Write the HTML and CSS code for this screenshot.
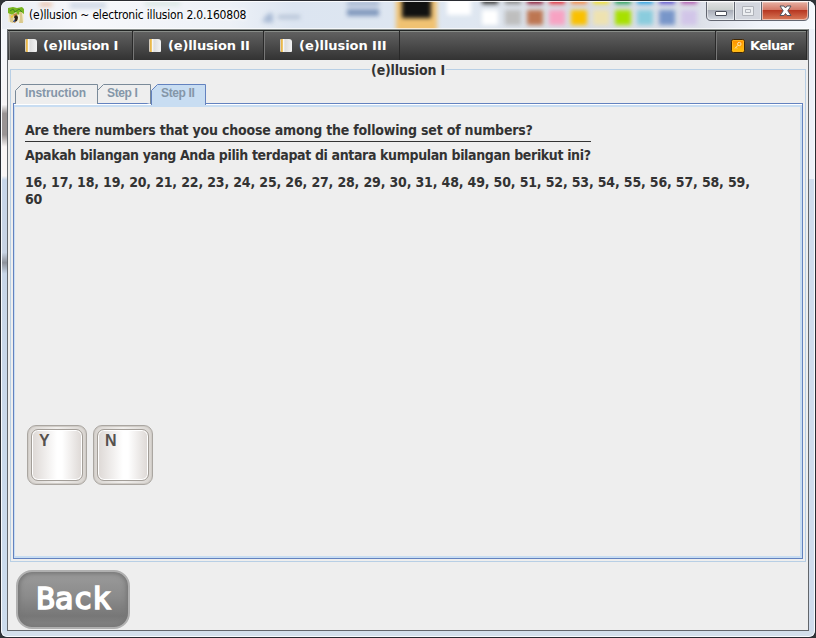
FILE: index.html
```html
<!DOCTYPE html>
<html lang="id">
<head>
<meta charset="utf-8">
<title>(e)llusion ~ electronic illusion 2.0.160808</title>
<link rel="stylesheet" href="styles.css">
</head>
<body>
<div class="window">
  <svg class="glass" width="816" height="638" aria-hidden="true">
    <defs>
      <filter id="soft" x="-30%" y="-30%" width="160%" height="160%" color-interpolation-filters="sRGB"><feGaussianBlur stdDeviation="2.2"/></filter>
      <linearGradient id="top" x1="0" x2="1" y1="0" y2="0">
        <stop offset="0" stop-color="#e9edf4"/><stop offset=".1" stop-color="#f7f8fb"/><stop offset=".28" stop-color="#edf1f7"/><stop offset=".36" stop-color="#dce5f1"/><stop offset=".58" stop-color="#dfe7f1"/><stop offset=".7" stop-color="#d8dce3"/><stop offset=".86" stop-color="#dde1e9"/><stop offset=".93" stop-color="#f0f4fa"/><stop offset="1" stop-color="#f6f9fd"/>
      </linearGradient>
      <linearGradient id="side" x1="0" x2="0" y1="0" y2="1">
        <stop offset="0" stop-color="#f4f7fb"/><stop offset=".12" stop-color="#f6f3f4"/><stop offset=".125" stop-color="#f7f5f6"/><stop offset=".14" stop-color="#9a9494"/><stop offset=".175" stop-color="#9a9494"/><stop offset=".195" stop-color="#f9f5f5"/><stop offset=".243" stop-color="#f9f5f5"/><stop offset=".25" stop-color="#c8d6e9"/><stop offset=".37" stop-color="#c8d3e3"/><stop offset=".387" stop-color="#8e929b"/><stop offset=".405" stop-color="#c8d6e8"/><stop offset="1" stop-color="#ccdced"/>
      </linearGradient>
    </defs>
    <rect width="816" height="638" fill="#ccdbed"/>
    <rect y="1" width="816" height="28" fill="url(#top)"/>
    <rect x="2" y="29" width="5" height="604" fill="url(#side)"/>
    <rect x="809" y="29" width="5" height="150" fill="#edf1f8"/>
    <rect x="809" y="179" width="5" height="452" fill="#d0dced"/>
    <rect x="2" y="631" width="812" height="5" fill="#d3dfeb"/>
    <g filter="url(#soft)">
      <rect x="40" y="2" width="12" height="5" fill="#eac9b5"/><rect x="70" y="2" width="36" height="7" fill="#d4dce8"/><rect x="145" y="1" width="35" height="5" fill="#dce8e5"/>
      <path d="M262 22q6-12 11-8v9z" fill="#aabbd5"/><rect x="278" y="15" width="22" height="4" fill="#b6c3d6"/>
      <rect x="347" y="1" width="32" height="5" fill="#a8b8d2"/><rect x="347" y="9" width="32" height="7" fill="#8299bd"/>
      <rect x="396" y="-4" width="41" height="38" fill="#f0c272"/><rect x="402" y="-4" width="29" height="22" fill="#111"/>
      <rect x="447" y="-4" width="24" height="19" fill="#fff"/>
    </g>
    <g filter="url(#soft)">
      <g><rect x="482" y="-4" width="16" height="8" fill="#333"/><rect x="505" y="-4" width="16" height="8" fill="#888"/><rect x="527" y="-4" width="16" height="8" fill="#8a1530"/><rect x="549" y="-4" width="16" height="8" fill="#e32935"/><rect x="571" y="-4" width="16" height="8" fill="#f48a42"/><rect x="593" y="-4" width="16" height="8" fill="#f1df28"/><rect x="615" y="-4" width="16" height="8" fill="#239d54"/><rect x="637" y="-4" width="16" height="8" fill="#239ee1"/><rect x="659" y="-4" width="16" height="8" fill="#5c51cc"/><rect x="681" y="-4" width="16" height="8" fill="#af58b0"/></g>
      <g><rect x="482" y="10" width="16" height="15" fill="#fff"/><rect x="505" y="10" width="16" height="15" fill="#bebebe"/><rect x="527" y="10" width="16" height="15" fill="#bd7652"/><rect x="549" y="10" width="16" height="15" fill="#f7a2c2"/><rect x="571" y="10" width="16" height="15" fill="#fac000"/><rect x="593" y="10" width="16" height="15" fill="#eee2b0"/><rect x="615" y="10" width="16" height="15" fill="#a7e000"/><rect x="637" y="10" width="16" height="15" fill="#8accdd"/><rect x="659" y="10" width="16" height="15" fill="#7896c9"/><rect x="681" y="10" width="16" height="15" fill="#d1c5e8"/></g>
    </g>
    <path d="M7 28.500h802" stroke="#fff" opacity=".7"/>
  </svg>

  <header class="titlebar">
    <svg class="app-icon" width="16" height="17" viewBox="0 0 16 17" aria-hidden="true">
      <path d="M0 2h16v13H0z" fill="#f4eed7"/><path d="M0 1l5-1 4 1 5-1 2 2v5l-3-2-3 3-2-3-4 3-4-2z" fill="#77b51f"/><path d="M2 4l3-2 2 3 4-3 3 3" fill="none" stroke="#408621"/><path d="M11 5l1 6-1 5h4l-1-11M1 7l1 8 3 1 1-8z" fill="#d9c98d"/><path d="M5 7l4-1 1 6-3 4-2-1 2-3z" fill="#c18b3e"/><path d="M8 8l2 2-1 4-4 1 2-3-1-2z" fill="#2a241f"/><path d="M3 9l2-1v2l-2 1z" fill="#f1c52e"/><path d="M5 14l2-1v2z" fill="#3d69c1"/>
    </svg>
    <span class="caption">(e)llusion ~ electronic illusion 2.0.160808</span>
    <div class="controls">
      <svg width="104" height="21" viewBox="0 0 104 21" aria-label="Window controls">
        <defs><linearGradient id="cg" x2="0" y2="1"><stop stop-color="#e3e3e5"/><stop offset=".45" stop-color="#cbd0ce"/><stop offset=".5" stop-color="#a9adb8"/><stop offset="1" stop-color="#d4dae3"/></linearGradient>
        <linearGradient id="cl" x2="0" y2="1"><stop stop-color="#e9b7aa"/><stop offset=".45" stop-color="#d47b6a"/><stop offset=".5" stop-color="#b73822"/><stop offset="1" stop-color="#d97958"/></linearGradient></defs>
        <path d="M1 0v15q0 4 4 4h24V0z" fill="url(#cg)"/><path d="M29 0h26v19H29z" fill="#d3d6de"/><path d="M56 0h46v15q0 4-4 4H56z" fill="url(#cl)"/>
        <path d="M.5 0v15q0 4.500 4.500 4.500h93q4.500 0 4.500-4.500V0M28.500 0v19M55.500 0v19" fill="none" stroke="#626671"/>
        <path d="M1.500 1v14q0 3.500 3.500 3.500h22.500V1zM29.500 1v17.500h25V1zM56.500 1v17.500h41q4 0 4-3.500V1z" fill="none" stroke="#fff" opacity=".5"/>
        <rect x="9.500" y="10.500" width="11" height="4" rx=".5" fill="#fff" stroke="#4b4f5b"/>
        <path d="M36.500 5.500h11v9h-11zM39.500 8.500h5v3h-5z" fill="#eceef1" stroke="#b0b3ba"/>
        <path d="M74 5h4l1.500 2L81 5h4l-3.200 4.800L85 14.500h-4l-1.500-2-1.500 2h-4l3.200-4.700z" fill="#fff" stroke="#53545e"/>
      </svg>
    </div>
  </header>

  <main class="client">
    <nav class="menubar">
      <a class="item one"><i class="note"></i><span>(e)llusion I</span></a>
      <a class="item two"><i class="note"></i><span>(e)llusion II</span></a>
      <a class="item three"><i class="note"></i><span>(e)llusion III</span></a>
      <a class="item exit"><svg width="14" height="14" viewBox="0 0 14 14" aria-hidden="true"><defs><linearGradient id="kg" x2="0" y2="1"><stop stop-color="#ff8a00"/><stop offset="1" stop-color="#ffc60c"/></linearGradient></defs><rect x=".5" y=".5" width="13" height="13" rx="2" fill="url(#kg)" stroke="#402705"/><rect x="1.500" y="1.500" width="11" height="11" rx="1" fill="none" stroke="#ffb51b"/><circle cx="8.300" cy="5" r="1.700" fill="none" stroke="#ffe5ad"/><path d="M7 6.300L4 9.500M5 8.500l1 1" stroke="#ffe5ad" fill="none"/></svg><span>Keluar</span></a>
    </nav>

    <fieldset class="group">
      <legend>(e)llusion I</legend>
      <div class="tabs">
        <div class="tab instruction"><svg width="83" height="20"><path d="M.5 20V6.500L6.500.500H82.500V20" fill="#eee" stroke="#7a8a99"/></svg><span>Instruction</span></div>
        <div class="tab step1"><svg width="54" height="20"><path d="M.5 6.500L6.500.500H53.500V20" fill="#eee" stroke="#7a8a99"/></svg><span>Step I</span></div>
        <div class="tab step2"><svg width="55" height="21"><path d="M.5 21V6.500L6.500.500H54.500V21" fill="#c8ddf2" stroke="#6382bf"/></svg><span>Step II</span></div>
      </div>
      <section class="panel">
        <p class="question en">Are there numbers that you choose among the following set of numbers?</p>
        <p class="question local">Apakah bilangan yang Anda pilih terdapat di antara kumpulan bilangan berikut ini?</p>
        <p class="numbers">16, 17, 18, 19, 20, 21, 22, 23, 24, 25, 26, 27, 28, 29, 30, 31, 48, 49, 50, 51, 52, 53, 54, 55, 56, 57, 58, 59,<br>60</p>
        <div class="answers"><button class="key"><span>Y</span></button><button class="key"><span>N</span></button></div>
      </section>
    </fieldset>
    <button class="back"><span>Back</span></button>
  </main>
</div>
</body>
</html>
```
FILE: styles.css
```css
* { box-sizing: border-box; }
body { margin: 0; background: #303438; overflow: hidden; }
.window { position: relative; width: 816px; height: 638px; overflow: hidden; border: 1px solid #292b31; border-radius: 8px 8px 7px 7px; padding: 0 7px 7px 6px; }
.glass { position: absolute; left: -1px; top: -1px; }
.window::after { content: ""; position: absolute; inset: 0; border: 1px solid rgba(255,255,255,.85); border-radius: 6px; pointer-events: none; }
.titlebar { position: relative; height: 28px; display: flex; align-items: flex-start; padding: 6px 0 0 1px; }
.app-icon { flex: none; }
.caption { margin-left: 5px; font: 12px/16px "DejaVu Sans Condensed", "DejaVu Sans", sans-serif; font-stretch: condensed; letter-spacing: -.19px; color: #000; white-space: nowrap; text-shadow: 0 0 5px #fff, 0 0 5px #fff; }
.controls { margin: -6px -2px 0 auto; height: 21px; }
.controls svg { display: block; }
.client { position: relative; width: 802px; height: 602px; background: #eee; border: 1px solid #62666b; border-top-color: #8c9290; }
.menubar { height: 30px; display: flex; background: linear-gradient(#626262, #333); border-top: 1px solid #202322; box-shadow: inset 0 1px #888c88; padding-left: 1px; border-right: 1px solid #777; }
.item { display: flex; align-items: center; color: #fff; font: bold 13px/29px "DejaVu Sans", sans-serif; border-right: 1px solid #292929; border-left: 1px solid #777; padding-left: 15px; white-space: nowrap; }
.item span { margin-left: 6px; letter-spacing: -.3px; }
.one { width: 124px; }
.two { width: 131px; }
.three { width: 136px; }
.two span { margin-left: 7px; letter-spacing: -.14px; }
.three span { margin-left: 7px; letter-spacing: -.06px; }
.exit { margin-left: auto; width: 91px; box-shadow: -1px 0 #292929; padding-left: 14px; }
.exit span { margin-left: 5px; letter-spacing: -.7px; }
.note { width: 12px; height: 13px; border-radius: 1px 3px 1px 1px; background: linear-gradient(90deg, #d5ccbd 1px, #e6b03c 1px, #f0cd79 3px, #fff 3px, #dedede 5px, #f3f3f3 12px); }
.group { height: 500px; margin: 2px 2px 0; padding: 0; border: 1px solid #b8cfe5; min-width: 0; }
.group legend { margin: 0 auto; padding: 0 1px; height: 15px; font: bold 14px/16px "DejaVu Sans Condensed", "DejaVu Sans", sans-serif; font-stretch: condensed; letter-spacing: -.2px; color: #333; }
.tabs { display: flex; height: 20px; margin: 7px 0 -1px 4px; position: relative; }
.tab { position: relative; height: 20px; margin-right: -1px; font: bold 12px/18px "Liberation Sans", sans-serif; color: #8496a8; letter-spacing: -.1px; }
.tab svg { display: block; }
.tab span { position: absolute; left: 10px; top: 0; white-space: nowrap; }
.step1, .step2 { letter-spacing: -.35px; }
.step2 { margin-left: 1px; }
.panel { height: 456px; margin: 0 2px; padding: 18px 10px 0 11px; border: 1px solid #6382bf; box-shadow: inset 0 1px #fff, inset 1px 0 #c8ddf2, inset -2px -2px #c8ddf2, inset 0 3px #c8ddf2; font: bold 14px/17px "DejaVu Sans Condensed", "DejaVu Sans", sans-serif; font-stretch: condensed; color: #333; }
.panel p { margin: 0; white-space: nowrap; }
.question { width: 566px; }
.en { height: 20px; border-bottom: 1px solid #333; letter-spacing: -.2px; }
.panel .local { margin-top: 5px; letter-spacing: -.36px; }
.panel .numbers { margin-top: 10px; letter-spacing: -.165px; }
.answers { display: flex; gap: 6px; margin: 217px 0 0 2px; }
.key { display: flex; width: 60px; height: 60px; padding: 3px; border: 1px solid #aaa6a1; border-radius: 9px; background: linear-gradient(90deg, #d8d4d0, #f1efed 50%, #d8d4d0); box-shadow: inset 0 0 0 1px #d0ccc7; }
.key span { flex: 1; height: 52px; border: 1px solid #a39e98; border-radius: 7px; box-shadow: inset 0 0 0 1px #fff; padding: 1px 0 0 7px; text-align: left; font: bold 16px/20px "Liberation Sans", sans-serif; color: #56524e; background: linear-gradient(90deg, #ddd8d5, #fff 50%, #fff 60%, #ddd8d5); }
.back { display: block; width: 114px; height: 59px; margin: 8px 0 0 8px; padding: 0 0 4px 1px; border: 2px solid #b0b0b0; border-radius: 16px; background: linear-gradient(#9b9b9b, #8b8b8b 45%, #777 80%, #858585); box-shadow: inset 0 0 4px 2px #777; color: #fff; font: 31px/46px "DejaVu Sans Mono", monospace; -webkit-text-stroke: 1.6px #fff; }
```
